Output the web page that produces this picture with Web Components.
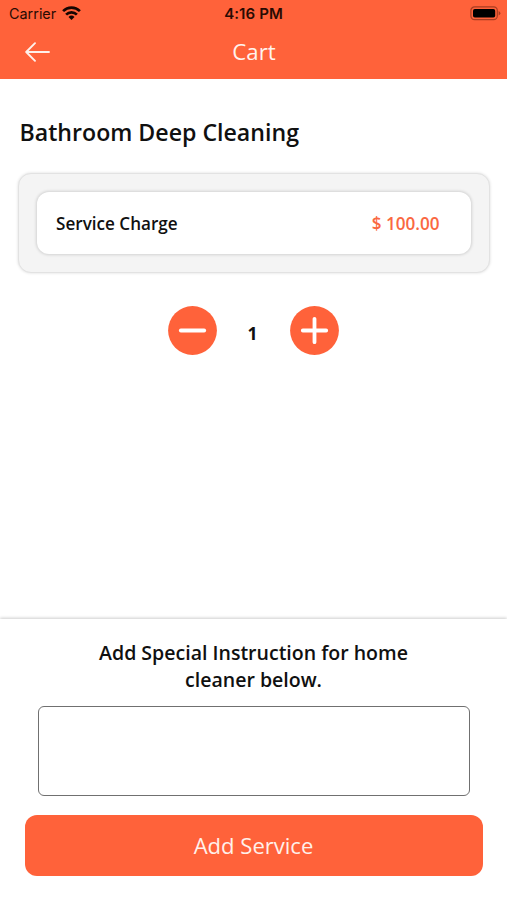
<!DOCTYPE html>
<html lang="en">
<head>
<meta charset="utf-8">
<title>Cart</title>
<style>
  html, body { margin: 0; height: 100%; background: #fff; }
  body { --accent: #ff623a; font-family: "Open Sans", sans-serif; color: #101010; overflow: hidden; }
</style>
</head>
<body>
<cart-screen></cart-screen>
<script>
const define = (name, html) => customElements.define(name, class extends HTMLElement {
  constructor() {
    super();
    const t = document.createElement('template');
    t.innerHTML = html;
    this.attachShadow({ mode: 'open' }).append(t.content.cloneNode(true));
  }
});

define('status-bar', `
<style>
  :host { display: grid; grid-template-columns: 1fr auto 1fr; align-items: center; height: 28px; box-sizing: border-box;
    padding: 0 6px 1px 9px; color: #280b03; font: 400 14.4px/27px Inter, sans-serif; }
  .left { display: flex; align-items: center; gap: 6px; }
  .time { font-weight: 600; font-size: 15px; letter-spacing: .1px; padding-right: 3px; }
  svg { display: block; }
  .left svg { margin-top: -1px; }
  .battery { justify-self: end; margin-top: -1px; }
</style>
<div class="left"><span>Carrier</span>
  <svg width="19" height="14" viewBox="0 0 19 14" fill="none" stroke="#160602" stroke-width="2.7">
    <path d="M1.1 5.1a12 12 0 0 1 16.8 0"/><path d="M4.1 8.6a7.7 7.7 0 0 1 10.8 0"/>
    <path d="M9.5 13.9 6.5 10.9a4.3 4.3 0 0 1 6 0z" fill="#160602" stroke="none"/>
  </svg>
</div>
<span class="time">4:16 PM</span>
<svg class="battery" width="31" height="15" viewBox="0 0 31 15">
  <rect x=".9" y=".9" width="26.4" height="12.8" rx="3.6" fill="none" stroke="#a83d22" stroke-width="1.2"/>
  <rect x="3" y="3" width="22.2" height="8.6" rx="1.8" fill="#000"/>
  <path d="M28.6 5q1.8.8 1.8 2.3T28.6 9.6z" fill="#a83d22"/>
</svg>`);

define('nav-bar', `
<style>
  :host { display: grid; grid-template-columns: 1fr auto 1fr; align-items: center; height: 51px; box-sizing: border-box;
    padding: 0 24px 3px 25px; color: #fff3ee; font-size: 22.2px; line-height: 48px; }
  svg { display: block; }
</style>
<svg width="26" height="20" viewBox="0 0 26 20" fill="none" stroke="#fff0ea" stroke-width="1.9" stroke-linecap="round" stroke-linejoin="round">
  <path d="M24 10H1.4M10 1.2 1.2 10 10 18.8"/>
</svg>
<slot></slot>`);

define('charge-card', `
<style>
  :host { display: block; box-sizing: border-box; padding: 18px; border: 1px solid #e2e2e2; border-radius: 13px;
    background: #f4f4f4; box-shadow: 0 0 3px rgba(0,0,0,.15); }
  .row { display: flex; justify-content: space-between; align-items: center; height: 62px; box-sizing: border-box;
    padding: 0 31.5px 0 19px; border-radius: 12px; background: #fff; box-shadow: 0 0 3px 1px rgba(0,0,0,.14);
    font-size: 17.1px; font-weight: 600; }
  .price { color: #fa6841; }
</style>
<div class="row"><slot></slot><span class="price"><slot name="price"></slot></span></div>`);

define('quantity-stepper', `
<style>
  :host { display: flex; justify-content: center; align-items: center; gap: 29.5px; padding-right: 1px; font-size: 17.5px; font-weight: 700; }
  svg { display: block; }
  .count { width: 14px; text-align: center; padding: 5px 2px 0 0; box-sizing: border-box; }
</style>
<svg width="49" height="49" viewBox="0 0 49 49"><circle cx="24.5" cy="24.5" r="24.4" fill="var(--accent)"/>
  <path d="M12.8 24.5H36.2" stroke="#fff" stroke-width="3.8" stroke-linecap="round"/></svg>
<span class="count"><slot></slot></span>
<svg width="49" height="49" viewBox="0 0 49 49"><circle cx="24.5" cy="24.5" r="24.4" fill="var(--accent)"/>
  <path d="M12.8 24.5H36.2M24.5 12.8V36.2" stroke="#fff" stroke-width="3.8" stroke-linecap="round"/></svg>`);

define('instruction-panel', `
<style>
  :host { display: flex; flex-direction: column; align-items: center; height: 281px; box-sizing: border-box; padding-top: 21px; background: #fff;
    box-shadow: 0 -1px 3px rgba(0,0,0,.2); }
  p { margin: 0; width: 340px; text-align: center; font-size: 19.55px; font-weight: 600; line-height: 26.5px; }
  .box { width: 432px; height: 90px; box-sizing: border-box; margin: 13px 0 0 1px; border: 1px solid #707070; border-radius: 6px; resize: none; outline: none; background: #fff; display: block; }
</style>
<p><slot></slot></p>
<textarea class="box"></textarea>
<slot name="action"></slot>`);

define('primary-button', `
<style>
  :host { display: block; width: 458px; margin-top: 18.5px; }
  button { display: block; width: 100%; height: 61px; padding: 0; border: 0; border-radius: 12px; background: var(--accent);
    color: #fff0ea; font: 400 22.05px/61px "Open Sans", sans-serif; }
</style>
<button><slot></slot></button>`);

define('cart-screen', `
<style>
  :host { display: flex; flex-direction: column; height: 100vh; }
  header { background: var(--accent); }
  main { flex: 1; padding: 37px 17px 0 18px; }
  h1 { margin: 0 0 25px 1.5px; font-size: 23.15px; font-weight: 600; line-height: 32px; }
  quantity-stepper { margin-top: 33px; }
</style>
<header><status-bar></status-bar><nav-bar>Cart</nav-bar></header>
<main>
  <h1>Bathroom Deep Cleaning</h1>
  <charge-card>Service Charge<span slot="price">$ 100.00</span></charge-card>
  <quantity-stepper>1</quantity-stepper>
</main>
<instruction-panel>Add Special Instruction for home cleaner below.<primary-button slot="action">Add Service</primary-button></instruction-panel>`);
</script>
</body>
</html>
